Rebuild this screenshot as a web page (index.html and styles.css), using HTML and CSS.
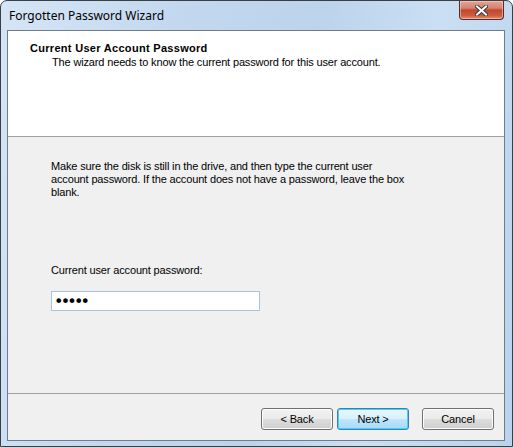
FILE: index.html
```html
<!DOCTYPE html>
<html lang="en">
<head>
    <meta charset="UTF-8">
    <meta name="viewport" content="width=device-width, initial-scale=1.0">
    <title>Forgotten Password Wizard</title>
    <link rel="stylesheet" href="styles.css">
</head>
<body>
    <div class="window">
        <!-- Title bar -->
        <div class="title-bar">
            <span class="title-text">Forgotten Password Wizard</span>
            <button class="close-btn" aria-label="Close">
                <svg width="13" height="11" viewBox="0 0 13 11">
                    <path d="M2 1.5 L11 9.5 M11 1.5 L2 9.5" stroke="#3d3d3d" stroke-width="4" stroke-linecap="square"/>
                    <path d="M2 1.5 L11 9.5 M11 1.5 L2 9.5" stroke="#ffffff" stroke-width="2" stroke-linecap="square"/>
                </svg>
            </button>
        </div>

        <div class="client">
            <!-- Wizard header -->
            <div class="wizard-header">
                <div class="header-title">Current User Account Password</div>
                <div class="header-sub">The wizard needs to know the current password for this user account.</div>
            </div>

            <!-- Page content -->
            <div class="wizard-body">
                <p class="intro">Make sure the disk is still in the drive, and then type the current user account password. If the account does not have a password, leave the box blank.</p>
                <label class="field-label" for="pw">Current user account password:</label>
                <input class="pw-input" id="pw" type="password" value="12345">
            </div>

            <!-- Buttons -->
            <div class="wizard-footer">
                <button class="btn">&lt; Back</button>
                <button class="btn default">Next &gt;</button>
                <button class="btn cancel">Cancel</button>
            </div>
        </div>
    </div>
</body>
</html>
```

FILE: styles.css
```css
html, body { margin: 0; padding: 0; }
body {
    font-family: "Liberation Sans", Arial, sans-serif; font-size: 11px;
    letter-spacing: -0.15px; color: #000;
}

.window {
    width: 513px; height: 447px; box-sizing: border-box;
    border: 1px solid #3a3f45; border-radius: 7px 7px 0 0;
    background: linear-gradient(100deg, #d5e5f6 0%, #c3d8ef 30%, #bcd3ec 55%, #cadff3 75%, #bad2ec 100%);
    display: flex; flex-direction: column;
    padding: 0 7px 5px 6px;
}

/* Title bar */
.title-bar {
    height: 29px; display: flex; align-items: flex-start;
    justify-content: space-between;
}
.title-text {
    font-family: "Noto Sans", "Open Sans", sans-serif; font-size: 12px;
    letter-spacing: 0; margin: 6px 0 0 2px; color: #000;
}
.close-btn {
    width: 45px; height: 19px; margin-right: 1px; padding: 0;
    border: 1px solid #5b2a25; border-top: none; border-radius: 0 0 4px 4px;
    background: linear-gradient(#e3a696 0%, #d4826f 40%, #c24630 50%, #cc5b3e 80%, #e48f6f 100%);
    box-shadow: inset 0 0 0 1px rgba(255, 220, 210, 0.5);
    display: flex; align-items: center; justify-content: center;
}

/* Client area */
.client {
    flex: 1; display: flex; flex-direction: column;
    border: 1px solid #6f7c8c; background: #f0f0f0;
}
.wizard-header {
    height: 106px; box-sizing: border-box; background: #fff;
    border-bottom: 1px solid #a0a0a0; padding: 10px 0 0 22px;
}
.header-title { font-weight: bold; line-height: 14px; letter-spacing: 0.3px; }
.header-sub { margin-left: 22px; line-height: 14px; }

.wizard-body {
    flex: 1; padding: 23px 0 0 43px;
    display: flex; flex-direction: column; align-items: flex-start;
    border-bottom: 1px solid #a0a0a0;
}
.intro { margin: 0; width: 357px; line-height: 13px; }
.field-label { margin-top: 65px; line-height: 13px; }
.pw-input {
    margin-top: 14px; width: 209px; height: 20px; box-sizing: border-box;
    border: 1px solid #a9c3dd; padding: 0 2px;
    font-family: "DejaVu Sans", sans-serif; font-size: 16px; letter-spacing: -2.8px;
    background: #fff; outline: none;
}

.wizard-footer {
    height: 46px; box-sizing: border-box; display: flex;
    justify-content: flex-end; align-items: flex-start;
    padding: 14px 10px 0 0;
}
.btn {
    width: 72px; height: 22px; margin-left: 4px; padding: 0;
    font-family: "Liberation Sans", Arial, sans-serif; font-size: 11px;
    letter-spacing: -0.15px; color: #000;
    border: 1px solid #707070; border-radius: 3px;
    background: linear-gradient(#f2f2f2 0%, #ebebeb 48%, #dddddd 52%, #cfcfcf 100%);
    box-shadow: inset 0 0 0 1px #fcfcfc;
}
.btn.default {
    border-color: #3c7fb1;
    background: linear-gradient(#eaf6fd 0%, #d9f0fc 48%, #bee6fd 52%, #a7d9f5 100%);
    box-shadow: inset 0 0 0 1px #48d0f8;
}
.btn.cancel { margin-left: 13px; }
```
